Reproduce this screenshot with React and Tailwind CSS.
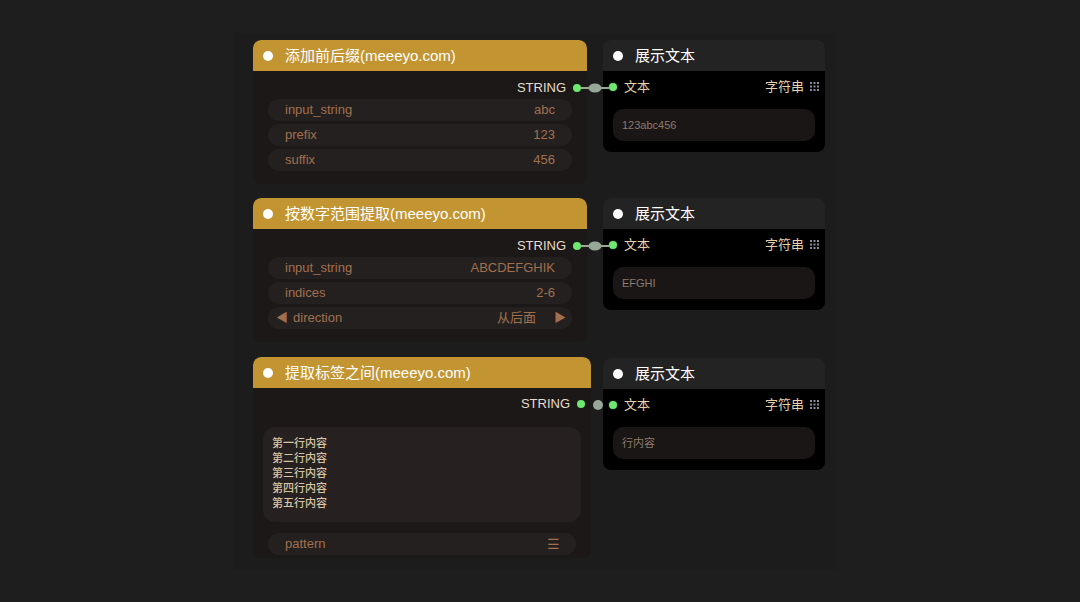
import React from "react";

const FONT = "font-['Liberation_Sans','Noto_Sans_CJK_SC',sans-serif]";

const GreenDot = () => (
  <span className="inline-block w-[8px] h-[8px] rounded-full bg-[#6fe86f] ring-1 ring-[#1a1a1a] shrink-0" />
);

const GridIcon = () => (
  <svg width="10" height="10" viewBox="0 0 10 10" className="shrink-0">
    {[1, 4.5, 8].map((y) =>
      [1, 4.5, 8].map((x) => (
        <rect key={`${x}-${y}`} x={x - 1} y={y - 1} width="2" height="2" fill="#8b8b9e" />
      ))
    )}
  </svg>
);

const Widget = ({ label, value }) => (
  <div className="h-[22px] rounded-full bg-[#242020] px-[17px] flex items-center justify-between text-[13px] text-[#a0704e]">
    <span>{label}</span>
    <span>{value}</span>
  </div>
);

const ComboWidget = ({ label, value }) => (
  <div className="h-[22px] rounded-full bg-[#242020] pl-[8px] pr-[6px] flex items-center justify-between text-[13px] text-[#a0704e]">
    <div className="flex items-center gap-[5px]">
      <span className="text-[12px]">◀</span>
      <span>{label}</span>
    </div>
    <div className="flex items-center gap-[18px]">
      <span>{value}</span>
      <span className="text-[12px]">▶</span>
    </div>
  </div>
);

const NodeHeader = ({ title, gold }) => (
  <div
    className={`h-[31px] rounded-t-lg flex items-center pl-[10px] gap-[12px] ${
      gold ? "bg-[#c29532]" : "bg-[#232323]"
    }`}
  >
    <span className="w-[10px] h-[10px] rounded-full bg-white" />
    <span className="text-[15px] text-white leading-none">{title}</span>
  </div>
);

const OutputRow = () => (
  <div className="h-[20px] flex items-center justify-end gap-[7px] pr-[6px]">
    <span className="text-[13px] text-[#e6dccd]">STRING</span>
    <GreenDot />
  </div>
);

const DisplayNode = ({ text, offset }) => (
  <div className={`w-[222px] rounded-lg overflow-hidden ${offset ? "mt-[1px]" : ""}`}>
    <NodeHeader title="展示文本" />
    <div className="bg-black pt-[6px] pb-[11px]">
      <div className="h-[20px] flex items-center pl-[6px] pr-[5px]">
        <GreenDot />
        <span className="ml-[7px] text-[13px] text-[#e6d2ae]">文本</span>
        <span className="ml-auto text-[13px] text-[#e6d2ae]">字符串</span>
        <span className="ml-[6px]">
          <GridIcon />
        </span>
      </div>
      <div className="mx-[10px] mt-[12px] h-[32px] rounded-[10px] bg-[#1a1615] px-[9px] flex items-center text-[11px] text-[#8c7b6b]">
        {text}
      </div>
    </div>
  </div>
);

const Link = ({ top, mid, short }) => (
  <svg
    className="absolute pointer-events-none"
    style={{ left: 320, top: top - 10 }}
    width="40"
    height="20"
    viewBox="0 0 40 20"
  >
    {short ? (
      <circle cx={mid - 320} cy="10" r="5" fill="#98a898" />
    ) : (
      <>
        <line x1="8" y1="10" x2="36" y2="10" stroke="#98a898" strokeWidth="2" />
        <ellipse cx={mid - 320} cy="10" rx="6.5" ry="4.5" fill="#98a898" />
      </>
    )}
  </svg>
);

export default function App() {
  return (
    <div className={`w-[1080px] h-[602px] bg-[#1e1e1e] pt-[33px] pl-[233px] overflow-hidden ${FONT}`}>
      <div className="w-[603px] h-[537px] bg-[#1c1c1c] pl-[20px] pt-[7px]">
        {/* row 1 */}
        <div className="relative flex items-start">
          <div className="w-[350px] shrink-0">
            <div className="w-[334px] rounded-lg overflow-hidden">
              <NodeHeader title="添加前后缀(meeeyo.com)" gold />
              <div className="bg-[#1c1818] pt-[7px] pb-[13px]">
                <OutputRow />
                <div className="mx-[15px] mt-[1px] flex flex-col gap-[3px]">
                  <Widget label="input_string" value="abc" />
                  <Widget label="prefix" value="123" />
                  <Widget label="suffix" value="456" />
                </div>
              </div>
            </div>
          </div>
          <DisplayNode text="123abc456" />
          <Link top={48} mid={342} />
        </div>

        {/* row 2 */}
        <div className="relative flex items-start mt-[14px]">
          <div className="w-[350px] shrink-0">
            <div className="w-[334px] rounded-lg overflow-hidden">
              <NodeHeader title="按数字范围提取(meeeyo.com)" gold />
              <div className="bg-[#1c1818] pt-[7px] pb-[13px]">
                <OutputRow />
                <div className="mx-[15px] mt-[1px] flex flex-col gap-[3px]">
                  <Widget label="input_string" value="ABCDEFGHIK" />
                  <Widget label="indices" value="2-6" />
                  <ComboWidget label="direction" value="从后面" />
                </div>
              </div>
            </div>
          </div>
          <DisplayNode text="EFGHI" />
          <Link top={48} mid={342} />
        </div>

        {/* row 3 */}
        <div className="relative flex items-start mt-[15px]">
          <div className="w-[350px] shrink-0">
            <div className="w-[338px] rounded-lg overflow-hidden">
              <NodeHeader title="提取标签之间(meeeyo.com)" gold />
              <div className="bg-[#1c1818] pt-[6px] pb-[3px]">
                <OutputRow />
                <div className="mx-[10px] mt-[13px] h-[95px] rounded-xl bg-[#262020] px-[9px] pt-[9px] text-[11px] leading-[15px] font-medium text-[#d6c4a4]">
                  <div>第一行内容</div>
                  <div>第二行内容</div>
                  <div>第三行内容</div>
                  <div>第四行内容</div>
                  <div>第五行内容</div>
                </div>
                <div className="mx-[15px] mt-[11px] h-[22px] rounded-full bg-[#242020] pl-[17px] pr-[16px] flex items-center justify-between text-[13px] text-[#a0704e]">
                  <span>pattern</span>
                  <span className="text-[14px]">☰</span>
                </div>
              </div>
            </div>
          </div>
          <DisplayNode text="行内容" offset />
          <Link top={48} mid={345} short />
        </div>
      </div>
    </div>
  );
}
